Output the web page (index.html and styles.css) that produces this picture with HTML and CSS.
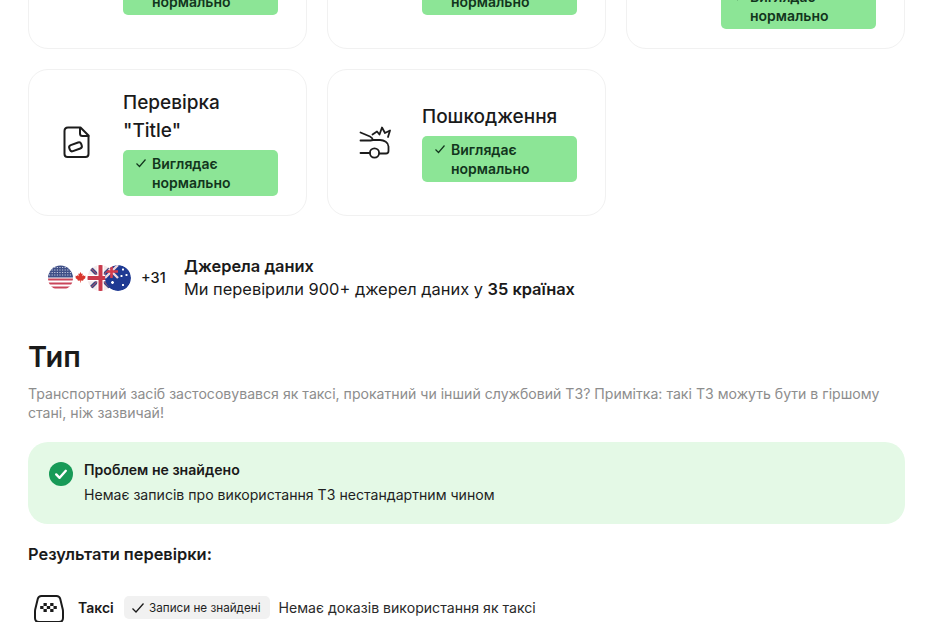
FILE: index.html
```html
<!DOCTYPE html>
<html lang="uk">
<head>
<meta charset="utf-8">
<title>Перевірка</title>
<link rel="stylesheet" href="styles.css">
</head>
<body>
<main class="page">
  <section class="cards">
    <article class="card">
      <div class="card-icon"></div>
      <div class="card-body">
        <h3 class="card-title">Перевірка</h3>
        <div class="badge"><svg class="badge-check" viewBox="0 0 12 12"><path d="M1.5 6.5 4.5 9.5 10.5 2.5"/></svg><span>Виглядає нормально</span></div>
      </div>
    </article>
    <article class="card">
      <div class="card-icon"></div>
      <div class="card-body">
        <h3 class="card-title">Перевірка</h3>
        <div class="badge"><svg class="badge-check" viewBox="0 0 12 12"><path d="M1.5 6.5 4.5 9.5 10.5 2.5"/></svg><span>Виглядає нормально</span></div>
      </div>
    </article>
    <article class="card">
      <div class="card-icon"></div>
      <div class="card-body">
        <h3 class="card-title">Перевірка<br>пробігу</h3>
        <div class="badge"><svg class="badge-check" viewBox="0 0 12 12"><path d="M1.5 6.5 4.5 9.5 10.5 2.5"/></svg><span>Виглядає нормально</span></div>
      </div>
    </article>
    <article class="card">
      <div class="card-icon">
        <svg class="icon" viewBox="0 0 40 40"><path d="M12 5.500H24.500L32.500 13.500V32C32.500 33.700 31.200 35 29.500 35H11.500C9.800 35 8.500 33.700 8.500 32V9C8.500 7 10 5.500 12 5.500Z"/><path d="M24 6V11.500C24 13 25 14 26.500 14H32.500"/><rect x="13.200" y="21.600" width="12.600" height="6.400" rx="2.400" transform="rotate(-20 19.500 24.800)"/></svg>
      </div>
      <div class="card-body">
        <h3 class="card-title">Перевірка<br>"Title"</h3>
        <div class="badge"><svg class="badge-check" viewBox="0 0 12 12"><path d="M1.5 6.5 4.5 9.5 10.5 2.5"/></svg><span>Виглядає нормально</span></div>
      </div>
    </article>
    <article class="card">
      <div class="card-icon">
        <svg class="icon icon-thin" viewBox="0 0 40 40"><path d="M5.500 10.500 15 14.500C16.500 15.200 17.500 16 18 18"/><path d="M5.500 18.500H15.500L18 18H25C29 18 33.500 20.500 33.500 24.500V29C33.500 30.600 32.500 31.500 31 31.500H24.500"/><circle cx="19.500" cy="31" r="4.600"/><path d="M5.500 31H15"/><path d="M17.500 12.500 22 9.500 24.500 12.500 27 5.500 30 11 35 8.500 33 15"/></svg>
      </div>
      <div class="card-body">
        <h3 class="card-title">Пошкодження</h3>
        <div class="badge"><svg class="badge-check" viewBox="0 0 12 12"><path d="M1.5 6.5 4.5 9.5 10.5 2.5"/></svg><span>Виглядає нормально</span></div>
      </div>
    </article>
  </section>

  <section class="sources">
    <div class="flags">
      <svg class="flags-svg" viewBox="0 0 84 28">
        <defs>
          <clipPath id="clip-us"><circle cx="12.500" cy="14" r="12.500"/></clipPath>
          <clipPath id="clip-uk"><circle cx="52.500" cy="14" r="13"/></clipPath>
          <clipPath id="clip-au"><circle cx="70" cy="14" r="13"/></clipPath>
        </defs>
        <g clip-path="url(#clip-us)">
          <rect x="0" y="1" width="25" height="26" fill="#fff"/>
          <path d="M0 15.500H25M0 19.500H25M0 23.500H25" stroke="#c9455a" stroke-width="2"/>
          <rect x="0" y="1" width="25" height="12.500" fill="#3f4f87"/>
          <path d="M1 3.500H24M1 6H24M1 8.500H24M1 11H24" stroke="#c7cce0" stroke-width="1" stroke-dasharray="1.200 1.400"/>
        </g>
        <path transform="translate(32.500 13) scale(.85)" d="M0 -6 1.300 -3.500 2.600 -4.200 2.100 -1 3.600 -2.400 4 -1.300 6 -1.600 5.400 .5 6.200 1 3 3.400 3.300 4.300 .4 4 .4 6.500 -.4 6.500 -.4 4 -3.300 4.300 -3 3.400 -6.200 1 -5.400 .5 -6 -1.600 -4 -1.300 -3.600 -2.400 -2.100 -1 -2.600 -4.200 -1.300 -3.500Z" fill="#d9362c"/>
        <g clip-path="url(#clip-uk)">
          <rect x="39" y="1" width="27" height="26" fill="#f3e9ea"/>
          <path d="M39.500 1 65.500 27M65.500 1 39.500 27" stroke="#37457f" stroke-width="3.500"/>
          <path d="M39.500 1 65.500 27M65.500 1 39.500 27" stroke="#d35a6c" stroke-width="1"/>
          <path d="M52.500 1V27M39 14H66" stroke="#fff" stroke-width="6.500"/>
          <path d="M52.500 1V27M39 14H66" stroke="#c93a4c" stroke-width="4"/>
        </g>
        <g clip-path="url(#clip-au)">
          <circle cx="70" cy="14" r="13" fill="#1f3a93"/>
          <path d="M57 1 70 14M70 1 57 14" stroke="#f0d5da" stroke-width="2.400"/>
          <path d="M63.500 1V14M57 7.500H70" stroke="#d53c4c" stroke-width="2.600"/>
          <path d="M63 18.500h3M64.500 17v3M74 5.500h2M75 4.500v2M77.500 11h2M78.500 10v2M72.500 12h2M73.500 11v2M74 21h2M75 20v2" stroke="#fff" stroke-width="1.400"/>
        </g>
      </svg>
      <span class="flags-more">+31</span>
    </div>
    <div class="sources-text">
      <div class="sources-title">Джерела даних</div>
      <div class="sources-line">Ми перевірили 900+ джерел даних у <b class="sources-strong">35 країнах</b></div>
    </div>
  </section>

  <h2 class="section-title">Тип</h2>
  <p class="section-text">Транспортний засіб застосовувався як таксі, прокатний чи інший службовий ТЗ? Примітка: такі ТЗ можуть бути в гіршому стані, ніж зазвичай!</p>

  <section class="notice">
    <svg class="notice-icon" viewBox="0 0 24 24"><circle cx="12" cy="12" r="12" fill="#179a57"/><path d="M7.200 12.400 10.600 15.800 16.800 8.800" fill="none" stroke="#fff" stroke-width="2.400" stroke-linecap="round" stroke-linejoin="round"/></svg>
    <div class="notice-text">
      <div class="notice-title">Проблем не знайдено</div>
      <div class="notice-line">Немає записів про використання ТЗ нестандартним чином</div>
    </div>
  </section>

  <h3 class="results-title">Результати перевірки:</h3>

  <div class="result-row">
    <svg class="taxi-icon" viewBox="0 0 32 32">
      <path d="M8.500 4H23.500C25.500 4 26.700 5 27.200 6.800L29.800 17.500C30 18.300 30 19 30 20V26C30 28.500 28.500 30 26 30H6C3.500 30 2 28.500 2 26V20C2 19 2 18.300 2.200 17.500L4.800 6.800C5.300 5 6.500 4 8.500 4Z" fill="none" stroke="#1b1b1b" stroke-width="2"/>
      <path d="M10.500 11h3.300v3h-3.300zM17.200 11h3.300v3h-3.300zM7.200 14h3.300v3H7.200zM13.800 14h3.400v3h-3.400zM20.500 14h3.300v3h-3.300zM10.500 17h3.300v3h-3.300zM17.200 17h3.300v3h-3.300z" fill="#1b1b1b"/>
    </svg>
    <span class="result-name">Таксі</span>
    <span class="chip"><svg class="chip-check" viewBox="0 0 14 14"><path d="M1.500 7.500 5 11 12.500 2.500"/></svg>Записи не знайдені</span>
    <span class="result-note">Немає доказів використання як таксі</span>
  </div>
</main>
</body>
</html>
```
FILE: styles.css
```css
* { box-sizing: border-box; }
html, body { margin: 0; padding: 0; height: 622px; overflow: hidden; background: #fff; }
body { font-family: Inter, "Noto Sans", sans-serif; color: #1a1a1a; }

.page { margin-top: -98px; padding: 0 28px; }

.cards { display: grid; grid-template-columns: repeat(3, 1fr); gap: 20.500px 20px; }
.card {
  display: flex; align-items: center; gap: 27px;
  height: 146.500px; padding: 0 28px 0 27px;
  border: 1px solid #f1f1f1; border-radius: 20px; background: #fff;
}
.card-icon { flex: 0 0 40px; height: 40px; }
.icon { display: block; width: 40px; height: 40px; fill: none; stroke: #1c1c1c; stroke-width: 2; stroke-linejoin: round; stroke-linecap: round; }
.icon-thin { stroke-width: 1.800; }
.card-body { flex: 1; min-width: 0; }
.card-title { margin: 0 0 4.500px; font-size: 19px; line-height: 28px; font-weight: 500; color: #1a1a1a; }
.badge {
  display: flex; gap: 5px; padding: 4px 12px;
  background: #8ce596; border-radius: 5px;
  font-size: 14px; line-height: 19px; font-weight: 600; color: #12351d;
}
.badge-check { flex: 0 0 12px; width: 12px; height: 12px; margin-top: 3px; fill: none; stroke: #12351d; stroke-width: 1.200; }

.sources { display: flex; align-items: center; margin: 39px 0 0 20px; height: 46px; }
.flags { display: flex; align-items: center; width: 136px; flex: 0 0 136px; }
.flags-svg { width: 84px; height: 28px; display: block; flex: 0 0 84px; }
.flags-more { margin-left: 9px; font-size: 14.500px; font-weight: 500; color: #1a1a1a; }
.sources-title { font-size: 16.400px; line-height: 23px; font-weight: 600; }
.sources-line { font-size: 16.400px; line-height: 23px; font-weight: 400; }
.sources-strong { font-weight: 600; }

.section-title { margin: 36px 0 0; font-size: 29px; line-height: 40px; font-weight: 600; color: #1a1a1a; }
.section-text { margin: 7px 0 0; font-size: 14.100px; line-height: 19.500px; color: #8d8d8d; }

.notice {
  display: flex; align-items: flex-start; gap: 11px;
  margin-top: 19px; padding: 17px 21px 18px;
  background: #e4f9e6; border-radius: 20px;
}
.notice-icon { flex: 0 0 24px; width: 24px; height: 24px; margin-top: 3px; }
.notice-title { font-size: 14.100px; line-height: 22px; font-weight: 600; color: #1a1a1a; }
.notice-line { margin-top: 3px; font-size: 14.100px; line-height: 22px; color: #1f1f1f; }

.results-title { margin: 18px 0 0; font-size: 16.400px; line-height: 24px; font-weight: 600; color: #1a1a1a; }

.result-row { display: flex; align-items: center; margin-top: 26px; padding-left: 5px; height: 32px; }
.taxi-icon { flex: 0 0 32px; width: 32px; height: 32px; }
.result-name { margin-left: 13px; width: 35px; font-size: 14px; font-weight: 600; color: #1a1a1a; }
.chip {
  display: inline-flex; align-items: center; gap: 4px;
  height: 23px; margin-left: 11px; padding: 0 9px 0 7px;
  background: #f1f1f1; border-radius: 5px;
  font-size: 11.700px; color: #1f1f1f;
}
.chip-check { width: 14px; height: 14px; fill: none; stroke: #1a1a1a; stroke-width: 1.300; }
.result-note { margin-left: 9px; font-size: 14.100px; color: #2a2a2a; }
```
